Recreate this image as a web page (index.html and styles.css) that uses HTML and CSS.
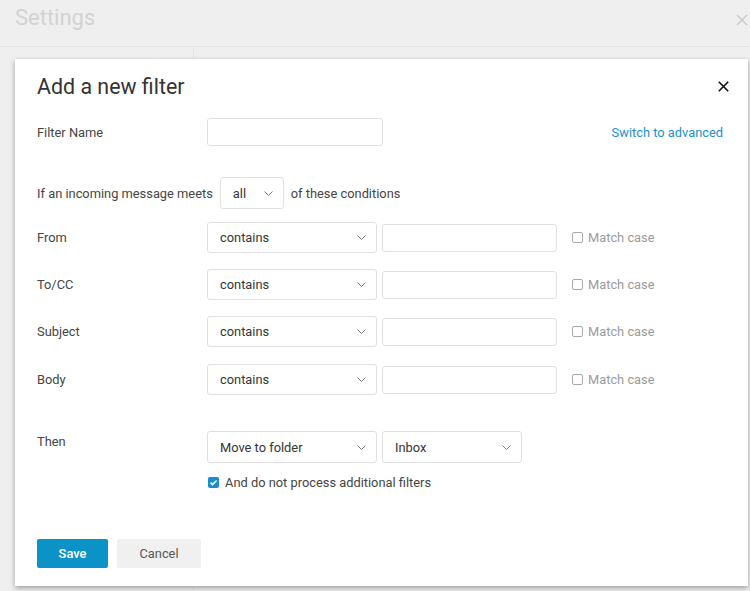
FILE: index.html
```html
<!DOCTYPE html>
<html>
<head>
<meta charset="utf-8">
<link rel="stylesheet" href="styles.css">
</head>
<body>
<div class="page">
  <header class="topbar">
    <h1 class="page-title">Settings</h1>
    <svg class="page-close" width="12" height="12" viewBox="0 0 12 12"><path d="M1 1L11 11M11 1L1 11" stroke="#c8c8c8" stroke-width="1.4" fill="none"/></svg>
  </header>
  <div class="body-area">
    <div class="sidebar"></div>
    <div class="main"></div>
  </div>

  <div class="modal">
    <div class="modal-head">
      <h2 class="modal-title">Add a new filter</h2>
      <svg class="modal-close" width="11" height="11" viewBox="0 0 11 11"><path d="M0.8 0.8L10.2 10.2M10.2 0.8L0.8 10.2" stroke="#111" stroke-width="1.6" fill="none"/></svg>
    </div>

    <div class="row row-name">
      <span class="label">Filter Name</span>
      <span class="input name-input"></span>
      <a class="link">Switch to advanced</a>
    </div>

    <div class="row row-meets">
      <span class="text">If an incoming message meets</span>
      <span class="select select-all">all<svg class="chev" width="9" height="5" viewBox="0 0 9 5"><path d="M0.5 0.5L4.5 4.5L8.5 0.5" stroke="#777" stroke-width="1" fill="none"/></svg></span>
      <span class="text">of these conditions</span>
    </div>

    <div class="row cond">
      <span class="label">From</span>
      <span class="select select-wide">contains<svg class="chev" width="9" height="5" viewBox="0 0 9 5"><path d="M0.5 0.5L4.5 4.5L8.5 0.5" stroke="#777" stroke-width="1" fill="none"/></svg></span>
      <span class="input cond-input"></span>
      <span class="match"><span class="box"></span>Match case</span>
    </div>
    <div class="row cond">
      <span class="label">To/CC</span>
      <span class="select select-wide">contains<svg class="chev" width="9" height="5" viewBox="0 0 9 5"><path d="M0.5 0.5L4.5 4.5L8.5 0.5" stroke="#777" stroke-width="1" fill="none"/></svg></span>
      <span class="input cond-input"></span>
      <span class="match"><span class="box"></span>Match case</span>
    </div>
    <div class="row cond">
      <span class="label">Subject</span>
      <span class="select select-wide">contains<svg class="chev" width="9" height="5" viewBox="0 0 9 5"><path d="M0.5 0.5L4.5 4.5L8.5 0.5" stroke="#777" stroke-width="1" fill="none"/></svg></span>
      <span class="input cond-input"></span>
      <span class="match"><span class="box"></span>Match case</span>
    </div>
    <div class="row cond cond-last">
      <span class="label">Body</span>
      <span class="select select-wide">contains<svg class="chev" width="9" height="5" viewBox="0 0 9 5"><path d="M0.5 0.5L4.5 4.5L8.5 0.5" stroke="#777" stroke-width="1" fill="none"/></svg></span>
      <span class="input cond-input"></span>
      <span class="match"><span class="box"></span>Match case</span>
    </div>

    <div class="row row-then">
      <span class="label label-then">Then</span>
      <div class="then-col">
        <div class="then-selects">
          <span class="select select-wide">Move to folder<svg class="chev" width="9" height="5" viewBox="0 0 9 5"><path d="M0.5 0.5L4.5 4.5L8.5 0.5" stroke="#777" stroke-width="1" fill="none"/></svg></span>
          <span class="select select-folder">Inbox<svg class="chev" width="9" height="5" viewBox="0 0 9 5"><path d="M0.5 0.5L4.5 4.5L8.5 0.5" stroke="#777" stroke-width="1" fill="none"/></svg></span>
        </div>
        <div class="stop">
          <span class="checked"><svg width="11" height="11" viewBox="0 0 11 11"><path d="M2.5 5.6L4.5 7.6L8.6 3.4" stroke="#fff" stroke-width="1.5" fill="none"/></svg></span>
          And do not process additional filters
        </div>
      </div>
    </div>

    <div class="actions">
      <span class="btn btn-save">Save</span>
      <span class="btn btn-cancel">Cancel</span>
    </div>
  </div>
</div>
</body>
</html>
```
FILE: styles.css
```css
* { box-sizing: border-box; }
html, body {
  margin: 0;
  padding: 0;
  width: 750px;
  height: 591px;
  overflow: hidden;
  background: #efefef;
  font-family: Roboto, "Liberation Sans", sans-serif;
}
.page {
  position: relative;
  width: 750px;
  height: 591px;
}
.topbar {
  height: 47px;
  display: flex;
  align-items: center;
  justify-content: space-between;
  padding: 0 2px 0 15px;
  border-bottom: 1px solid #e5e5e5;
}
.page-title {
  margin: 0;
  font-size: 22px;
  font-weight: 400;
  color: #d2d2d2;
  line-height: 26px;
  margin-top: -10px;
}
.page-close {
  margin-top: -6px;
}
.body-area {
  display: flex;
  height: 544px;
}
.sidebar {
  width: 194px;
  border-right: 1px solid #e5e5e5;
}
.main { flex: 1; }

.modal {
  position: absolute;
  left: 15px;
  top: 59px;
  width: 733px;
  height: 527px;
  background: #fff;
  box-shadow: 0 2px 5px rgba(0,0,0,0.35);
  padding: 0 0 0 22px;
  color: #444;
  font-size: 12.85px;
}
.modal-head {
  display: flex;
  align-items: center;
  justify-content: space-between;
  height: 28px;
  margin-top: 14px;
  padding-right: 19px;
}
.modal-close { margin-top: -2px; }
.modal-title {
  margin: 0;
  font-size: 21.4px;
  font-weight: 400;
  color: #333;
  line-height: 28px;
}
.row {
  display: flex;
  align-items: center;
}
.label {
  width: 170px;
  flex: none;
  color: #444;
}
.row-name {
  margin-top: 16px;
  height: 29px;
  padding-top: 1px;
}
.row-name .input { margin-top: -1px; }
.input {
  display: block;
  height: 28px;
  border: 1px solid #e0e0e0;
  border-radius: 3px;
  background: #fff;
}
.name-input { width: 176px; }
.link {
  margin-left: auto;
  margin-right: 25px;
  color: #1b8fd0;
}
.row-meets {
  margin-top: 31px;
  height: 32px;
}
.text { color: #444; }
.select {
  display: flex;
  align-items: center;
  justify-content: space-between;
  height: 32px;
  border: 1px solid #e0e0e0;
  border-radius: 3px;
  padding: 0 9px 0 12px;
  color: #333;
  background: #fff;
}
.select-all {
  width: 64px;
  margin: 0 7px;
  padding-right: 10px;
}
.cond {
  margin-top: 13px;
  height: 31px;
}
.cond + .cond { margin-top: 16px; }
.cond + .cond-last { margin-top: 17px; }
.cond .select { height: 31px; }
.select-wide { width: 170px; padding-right: 10px; }
.cond-input {
  width: 175px;
  margin-left: 5px;
}
.match {
  display: flex;
  align-items: center;
  margin-left: 15px;
  color: #9a9a9a;
}
.box {
  width: 11px;
  height: 11px;
  border: 1px solid #a8a8a8;
  border-radius: 2px;
  margin-right: 5px;
}
.row-then {
  margin-top: 36px;
  align-items: flex-start;
}
.label-then {
  line-height: 18px;
  padding-top: 2px;
}
.then-col {
  display: flex;
  flex-direction: column;
}
.then-selects {
  display: flex;
  gap: 5px;
}
.then-selects .select { height: 32px; }
.select-folder { width: 140px; padding-left: 12px; padding-right: 10px; }
.stop {
  display: flex;
  align-items: center;
  margin-top: 11px;
  height: 16px;
  color: #444;
  padding-left: 1px;
}
.checked {
  display: flex;
  width: 11px;
  height: 11px;
  border-radius: 2px;
  background: #1b8ccc;
  margin-right: 6px;
}
.actions {
  display: flex;
  gap: 9px;
  margin-top: 49px;
}
.btn {
  display: flex;
  align-items: center;
  justify-content: center;
  height: 29px;
  border-radius: 2px;
}
.btn-save {
  width: 71px;
  background: #0b93c8;
  color: #fff;
  font-weight: 500;
}
.btn-cancel {
  width: 84px;
  background: #f0f0f0;
  color: #555;
}
```
